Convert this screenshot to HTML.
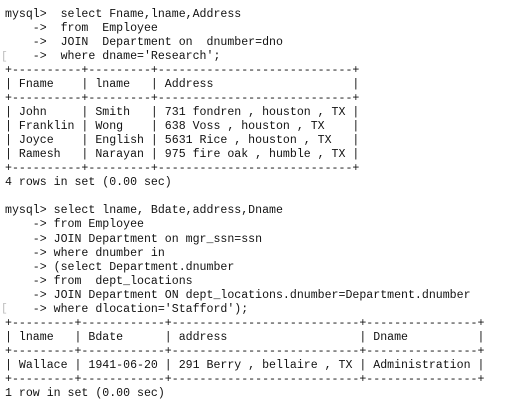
<!DOCTYPE html>
<html><head><meta charset="utf-8">
<style>
html,body{margin:0;padding:0;background:#fff;width:525px;height:408px;overflow:hidden;position:relative}
pre{margin:0;position:absolute;left:5px;top:8px;font-family:"Liberation Mono",monospace;font-size:11.58px;line-height:14.03px;color:#111;white-space:pre}
.b{position:absolute;left:1px;font-family:"Liberation Mono",monospace;font-size:11px;color:#bbb;line-height:14px}
</style></head><body>
<pre>mysql>  select Fname,lname,Address
    ->  from  Employee
    ->  JOIN  Department on  dnumber=dno
    ->  where dname='Research';
+----------+---------+----------------------------+
| Fname    | lname   | Address                    |
+----------+---------+----------------------------+
| John     | Smith   | 731 fondren , houston , TX |
| Franklin | Wong    | 638 Voss , houston , TX    |
| Joyce    | English | 5631 Rice , houston , TX   |
| Ramesh   | Narayan | 975 fire oak , humble , TX |
+----------+---------+----------------------------+
4 rows in set (0.00 sec)

mysql> select lname, Bdate,address,Dname
    -> from Employee
    -> JOIN Department on mgr_ssn=ssn
    -> where dnumber in
    -> (select Department.dnumber
    -> from  dept_locations
    -> JOIN Department ON dept_locations.dnumber=Department.dnumber
    -> where dlocation='Stafford');
+---------+------------+---------------------------+----------------+
| lname   | Bdate      | address                   | Dname          |
+---------+------------+---------------------------+----------------+
| Wallace | 1941-06-20 | 291 Berry , bellaire , TX | Administration |
+---------+------------+---------------------------+----------------+
1 row in set (0.00 sec)</pre>
<div class="b" style="top:50px">[</div>
<div class="b" style="top:302px">[</div>
</body></html>
